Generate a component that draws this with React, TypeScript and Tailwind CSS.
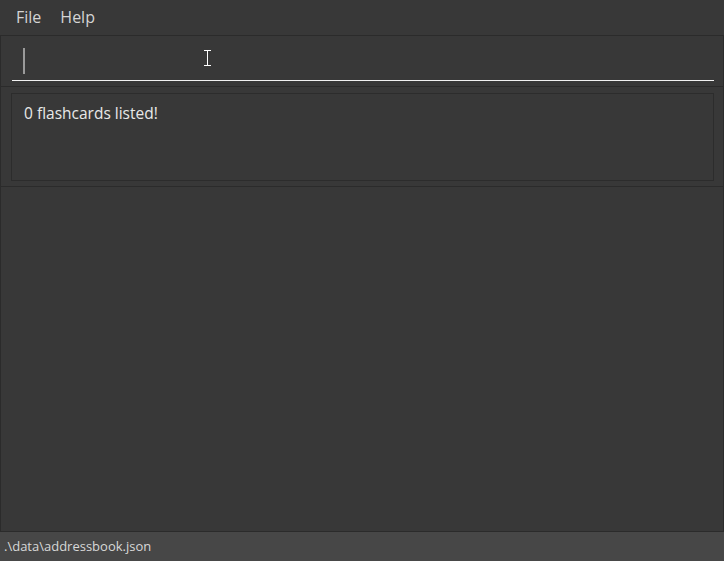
import React from 'react';

export default function App() {
  return (
    <div className="w-[724px] h-[561px] bg-[#383838] flex flex-col overflow-hidden font-['Open_Sans',sans-serif] text-[#d4d4d4]">
      {/* menu */}
      <div className="h-[36px] flex items-center gap-[19px] pl-[16px] border-b border-[#2b2b2b] text-[16px] pb-[1px]">
        <span>File</span>
        <span>Help</span>
      </div>

      {/* command box */}
      <div className="relative h-[51px] border-x border-b border-[#2b2b2b] pl-[11px] pr-[9px] pt-[11px]">
        <div className="h-[34px] border-b border-[#f2f2f2] pl-[11px] pt-[1px]">
          <div className="w-[2px] h-[26px] bg-[#9a9a9a]" />
        </div>
        <svg className="absolute left-[202px] top-[14px]" width="9" height="16" viewBox="0 0 9 16">
          <path d="M1 0.5h7M1 15.5h7M4.5 0.5v15" stroke="#fff" strokeWidth="1" fill="none" />
        </svg>
      </div>

      {/* result */}
      <div className="h-[100px] border-x border-b border-[#2b2b2b] pt-[6px] pl-[10px] pr-[9px]">
        <div className="h-[88px] border border-[#2c2c2c] pl-[12px] pt-[8px] text-[15.5px] text-[#e8e8e8]">
          0 flashcards listed!
        </div>
      </div>

      {/* list */}
      <div className="flex-1 border-x border-b border-[#2b2b2b]" />

      {/* status */}
      <div className="h-[29px] bg-[#474747] flex items-center pl-[4px] text-[13px] text-[#d8d8d8]">
        .\data\addressbook.json
      </div>
    </div>
  );
}
